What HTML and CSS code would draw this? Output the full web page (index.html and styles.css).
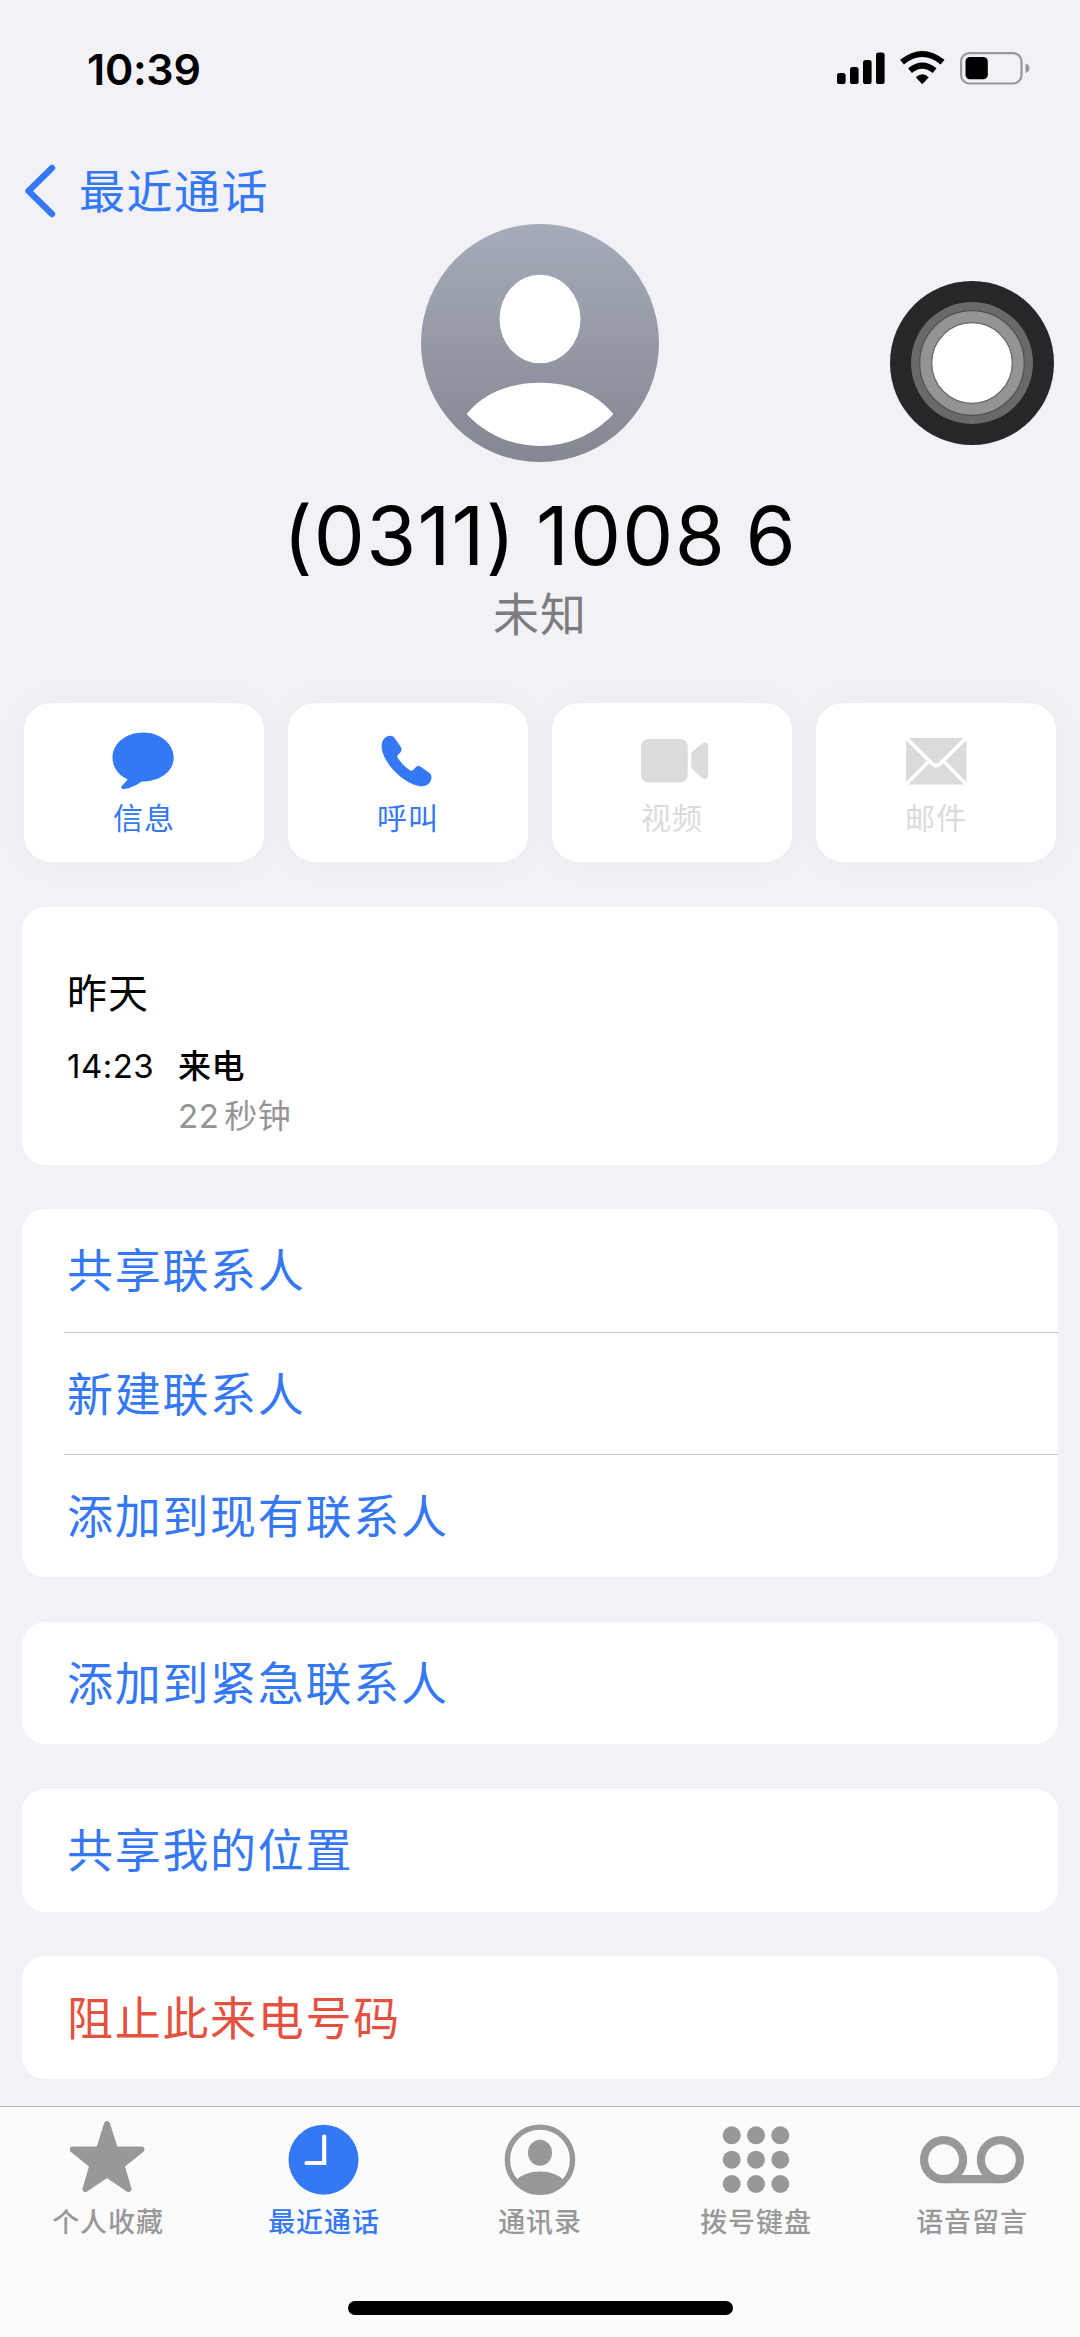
FILE: index.html
```html
<!DOCTYPE html>
<html lang="zh-CN">
<head>
<meta charset="utf-8">
<title>最近通话</title>
<link rel="stylesheet" href="styles.css">
</head>
<body>
<div class="screen">
  <header class="status">
    <span class="clock">10:39</span>
    <svg class="indicators" width="194" height="36" viewBox="0 0 194 36">
      <rect x="1" y="23" width="8.6" height="11" rx="2.6"/>
      <rect x="14" y="17" width="8.6" height="17" rx="2.6"/>
      <rect x="27" y="10" width="8.6" height="24" rx="2.6"/>
      <rect x="40" y="2.5" width="8.6" height="31.5" rx="2.6"/>
      <g fill="none" stroke="#000" stroke-width="6">
        <path d="M66 12.200Q86.300 -4.200 106.600 12.200"/>
        <path d="M74 20.700Q86.300 10.700 98.600 20.700"/>
      </g>
      <path d="M79.800 27.200Q86.300 21.300 92.800 27.200L87.300 33.200Q86.300 34.200 85.300 33.200Z"/>
      <rect x="125.100" y="3.100" width="60.400" height="30.400" rx="8.500" fill="none" stroke="#98989b" stroke-width="2.200"/>
      <rect x="129.500" y="7" width="22.300" height="22.300" rx="4.500"/>
      <path d="M189.500 13.500q4 1.200 4 4.800t-4 4.800z" fill="#98989b"/>
    </svg>
  </header>

  <nav class="back">
    <svg width="32" height="54" viewBox="0 0 32 54"><path d="M28 4L4.500 27L28 50" fill="none" stroke="#3478f6" stroke-width="6.400" stroke-linecap="round" stroke-linejoin="round"/></svg>
    <span>最近通话</span>
  </nav>

  <section class="profile">
    <svg width="238" height="238" viewBox="0 0 238 238">
      <defs><linearGradient id="shade" x1="0" y1="0" x2="0" y2="1"><stop offset="0" stop-color="#a5abb9"/><stop offset="1" stop-color="#858792"/></linearGradient></defs>
      <circle cx="119" cy="119" r="119" fill="url(#shade)"/>
      <ellipse cx="119" cy="95" rx="40.500" ry="44.300" fill="#fff"/>
      <path d="M46.500 189C64 168 90 158.700 119 158.700S174 168 191.500 189Q192.500 190 191.500 191C172 211 147 222 119 222S66 211 46.500 191Q45.500 190 46.500 189Z" fill="#fff"/>
    </svg>
    <h1 class="number">(0311) 1008 6</h1>
    <p class="subtitle">未知</p>
  </section>

  <section class="actions">
    <div class="action">
      <svg width="68" height="60" viewBox="0 0 68 60"><path transform="translate(-1 0)" d="M34 2.500C51 2.500 64.700 13.500 64.700 27.500S51 51.500 33 51.500C28 54.500 21 58.800 15 59C12 59 11.500 57.500 12.800 56C15 53.500 17.500 51.500 18.500 49.300C9 45 3.500 37 3.500 27.500C3.500 13.500 17 2.500 34 2.500Z"/></svg>
      <span>信息</span>
    </div>
    <div class="action">
      <svg width="68" height="60" viewBox="0 0 68 60"><path transform="translate(-4.500 0)" d="M17.500 6.500C20.500 5.200 23.500 6 25 8L31 16.500C32.500 18.600 32.300 20.500 31 22.200L28.300 25C27.500 26 27.600 27 28.300 28C31.500 33 36 37.500 41 40.500C41.800 41 42.500 41 43.300 40.300L46 37.500C47.800 35.700 49.700 35.700 51.500 37L60 43C62 44.500 62.200 47 61.800 49C60.500 55 55 57 49 56C30 51.500 14 31 12.200 18.500C11.700 13 13.500 8.300 17.500 6.500Z"/></svg>
      <span>呼叫</span>
    </div>
    <div class="action disabled">
      <svg width="74" height="60" viewBox="-3 0 74 60"><g transform="translate(2.700 0)"><rect x="0.300" y="9" width="46.700" height="43.500" rx="7.500"/><path d="M50.500 24.500Q50.500 22.500 52 21.200L61.500 13.500C64 11.500 67.500 13 67.500 16V45.500C67.500 48.500 64 50 61.500 48L52 39.700Q50.500 38.500 50.500 36.500Z"/></g></svg>
      <span>视频</span>
    </div>
    <div class="action disabled">
      <svg width="68" height="60" viewBox="0 0 68 60"><rect x="4" y="8" width="60.500" height="46.500" rx="1.500"/><path d="M3 6.500L30 33.500Q34.200 38 38.400 33.500L65.500 6.500M4 54.500L26.500 31.500M64.500 54.500L42 31.500" fill="none" stroke="#fff" stroke-width="3.600"/></svg>
      <span>邮件</span>
    </div>
  </section>

  <main class="cards">
    <section class="card history">
      <h2>昨天</h2>
      <div class="call">
        <time>14:23</time>
        <div><strong>来电</strong><span class="duration">22<span class="unit">秒钟</span></span></div>
      </div>
    </section>
    <section class="card">
      <a class="row">共享联系人</a>
      <a class="row">新建联系人</a>
      <a class="row">添加到现有联系人</a>
    </section>
    <section class="card"><a class="row">添加到紧急联系人</a></section>
    <section class="card"><a class="row">共享我的位置</a></section>
    <section class="card"><a class="row danger">阻止此来电号码</a></section>
  </main>

  <footer class="tabbar">
    <div class="tabs">
      <div class="tab">
        <svg width="76" height="76" viewBox="0 0 76 76"><path transform="translate(-1 0)" d="M38 4L46 29.500L72.500 29.500L52.700 45.500L59.500 69L38 54.500L16.500 69L23.300 45.500L3.500 29.500L30 29.500Z" stroke="currentColor" stroke-width="6" stroke-linejoin="round"/></svg>
        <span>个人收藏</span>
      </div>
      <div class="tab active">
        <svg width="76" height="76" viewBox="0 0 76 76"><circle cx="37.500" cy="39.700" r="35"/><path d="M38.200 16.500V43H20.500" fill="none" stroke="#fff" stroke-width="4.200" stroke-linecap="round"/></svg>
        <span>最近通话</span>
      </div>
      <div class="tab">
        <svg width="76" height="76" viewBox="0 0 76 76"><circle cx="38" cy="39.700" r="32.600" fill="none" stroke="currentColor" stroke-width="5.400"/><ellipse cx="38" cy="32.700" rx="12" ry="13"/><path d="M14.500 60C20 54.500 28 51.500 38 51.500S56 54.500 61.500 60C56 69 48 73.500 38 73.500S20 69 14.500 60Z"/></svg>
        <span>通讯录</span>
      </div>
      <div class="tab">
        <svg width="76" height="76" viewBox="0 0 76 76">
          <circle cx="13.700" cy="15.300" r="9"/><circle cx="38" cy="15.300" r="9"/><circle cx="62.300" cy="15.300" r="9"/>
          <circle cx="13.700" cy="39.700" r="9"/><circle cx="38" cy="39.700" r="9"/><circle cx="62.300" cy="39.700" r="9"/>
          <circle cx="13.700" cy="64" r="9"/><circle cx="38" cy="64" r="9"/><circle cx="62.300" cy="64" r="9"/>
        </svg>
        <span>拨号键盘</span>
      </div>
      <div class="tab">
        <svg width="106" height="76" viewBox="0 0 106 76"><g fill="none" stroke="currentColor" stroke-width="8.200"><circle cx="24.600" cy="39.700" r="19.500"/><circle cx="81.400" cy="39.700" r="19.500"/><path d="M24.600 59.200H81.400"/></g></svg>
        <span>语音留言</span>
      </div>
    </div>
    <div class="home"></div>
  </footer>

  <div class="assistive">
    <svg width="166" height="166" viewBox="0 0 166 166">
      <circle cx="83" cy="83" r="82" fill="#272729"/>
      <circle cx="83" cy="83" r="61" fill="#69696a"/>
      <circle cx="83" cy="83" r="52.300" fill="#949495" stroke="#515152" stroke-width="1.200"/>
      <circle cx="83" cy="83" r="40.300" fill="#fff" stroke="#68686a" stroke-width="1.200"/>
    </svg>
  </div>
</div>
</body>
</html>
```
FILE: styles.css
```css
* {
  box-sizing: border-box;
}

body {
  margin: 0;
  background: #f1f1f6;
  color: #000;
  font-family: Inter, "Noto Sans CJK SC", sans-serif;
}

h1,
h2,
p {
  margin: 0;
  font-weight: 400;
}

svg {
  display: block;
  flex: none;
  fill: currentColor;
}

.screen {
  position: relative;
  width: 1080px;
  height: 2337px;
  overflow: hidden;
  display: flex;
  flex-direction: column;
}

.status {
  height: 136px;
  padding: 0 50px 0 87px;
  display: flex;
  align-items: center;
  justify-content: space-between;
}

.clock {
  padding-top: 1px;
  font-size: 43px;
  font-weight: 600;
  line-height: 50px;
  letter-spacing: -0.3px;
}

.back {
  height: 110px;
  margin-bottom: -22px;
  padding: 0 24px;
  display: flex;
  align-items: center;
  gap: 23px;
  color: #3478f6;
  font-size: 46px;
  line-height: 56px;
  letter-spacing: 1.5px;
}

.profile {
  display: flex;
  flex-direction: column;
  align-items: center;
}

.number {
  margin-top: 26px;
  font-size: 81px;
  line-height: 97px;
  letter-spacing: 1.2px;
  word-spacing: -4.5px;
  white-space: nowrap;
}

.subtitle {
  color: #7c7c80;
  font-size: 46px;
  line-height: 58px;
  letter-spacing: 1px;
}

.actions {
  margin-top: 60px;
  padding: 0 24px;
  display: grid;
  grid-template-columns: repeat(4, 1fr);
  gap: 24px;
}

.action {
  height: 159px;
  padding-top: 27px;
  display: flex;
  flex-direction: column;
  align-items: center;
  gap: 8px;
  border-radius: 27px;
  background: #fff;
  box-shadow: 0 0 40px rgba(0, 0, 0, 0.035);
  color: #3478f6;
  font-size: 30px;
  line-height: 40px;
  letter-spacing: 1px;
}

.action.disabled {
  color: #dbdbdc;
}

.cards {
  padding: 45px 22px 0;
  display: flex;
  flex-direction: column;
  gap: 44.6px;
}

.card {
  border-radius: 23px;
  background: #fff;
}

.history {
  height: 257.500px;
  padding: 62px 45px 0;
}

.history h2 {
  font-size: 40px;
  line-height: 50px;
  letter-spacing: 1px;
}

.call {
  margin-top: 22px;
  display: flex;
  font-size: 33px;
  line-height: 50px;
  letter-spacing: 0.5px;
}

.call time {
  width: 111px;
}

.call strong,
.duration {
  display: block;
}

.call strong {
  font-weight: 500;
}

.duration {
  color: #959597;
}

.unit {
  margin-left: 5px;
}

.row {
  display: flex;
  align-items: center;
  height: 122.700px;
  margin-left: 42px;
  padding-left: 3px;
  color: #3478f6;
  font-size: 46px;
  line-height: 56px;
  letter-spacing: 1.7px;
}

.row + .row {
  border-top: 1px solid #cbcbcd;
}

.row.danger {
  color: #e5513f;
}

.tabbar {
  margin-top: auto;
  height: 231px;
  border-top: 1px solid #b6b6b9;
  background: #fbfbfc;
}

.tabs {
  height: 194px;
  padding-top: 13px;
  display: grid;
  grid-template-columns: repeat(5, 1fr);
}

.tab {
  display: flex;
  flex-direction: column;
  align-items: center;
  gap: 8px;
  color: #989898;
  font-size: 27px;
  font-weight: 500;
  line-height: 38px;
  letter-spacing: 0.9px;
}

.tab.active {
  color: #3478f6;
}

.home {
  width: 385px;
  height: 14px;
  margin: 0 auto;
  border-radius: 7px;
  background: #000;
}

.assistive {
  position: absolute;
  left: 889px;
  top: 280px;
}
```
